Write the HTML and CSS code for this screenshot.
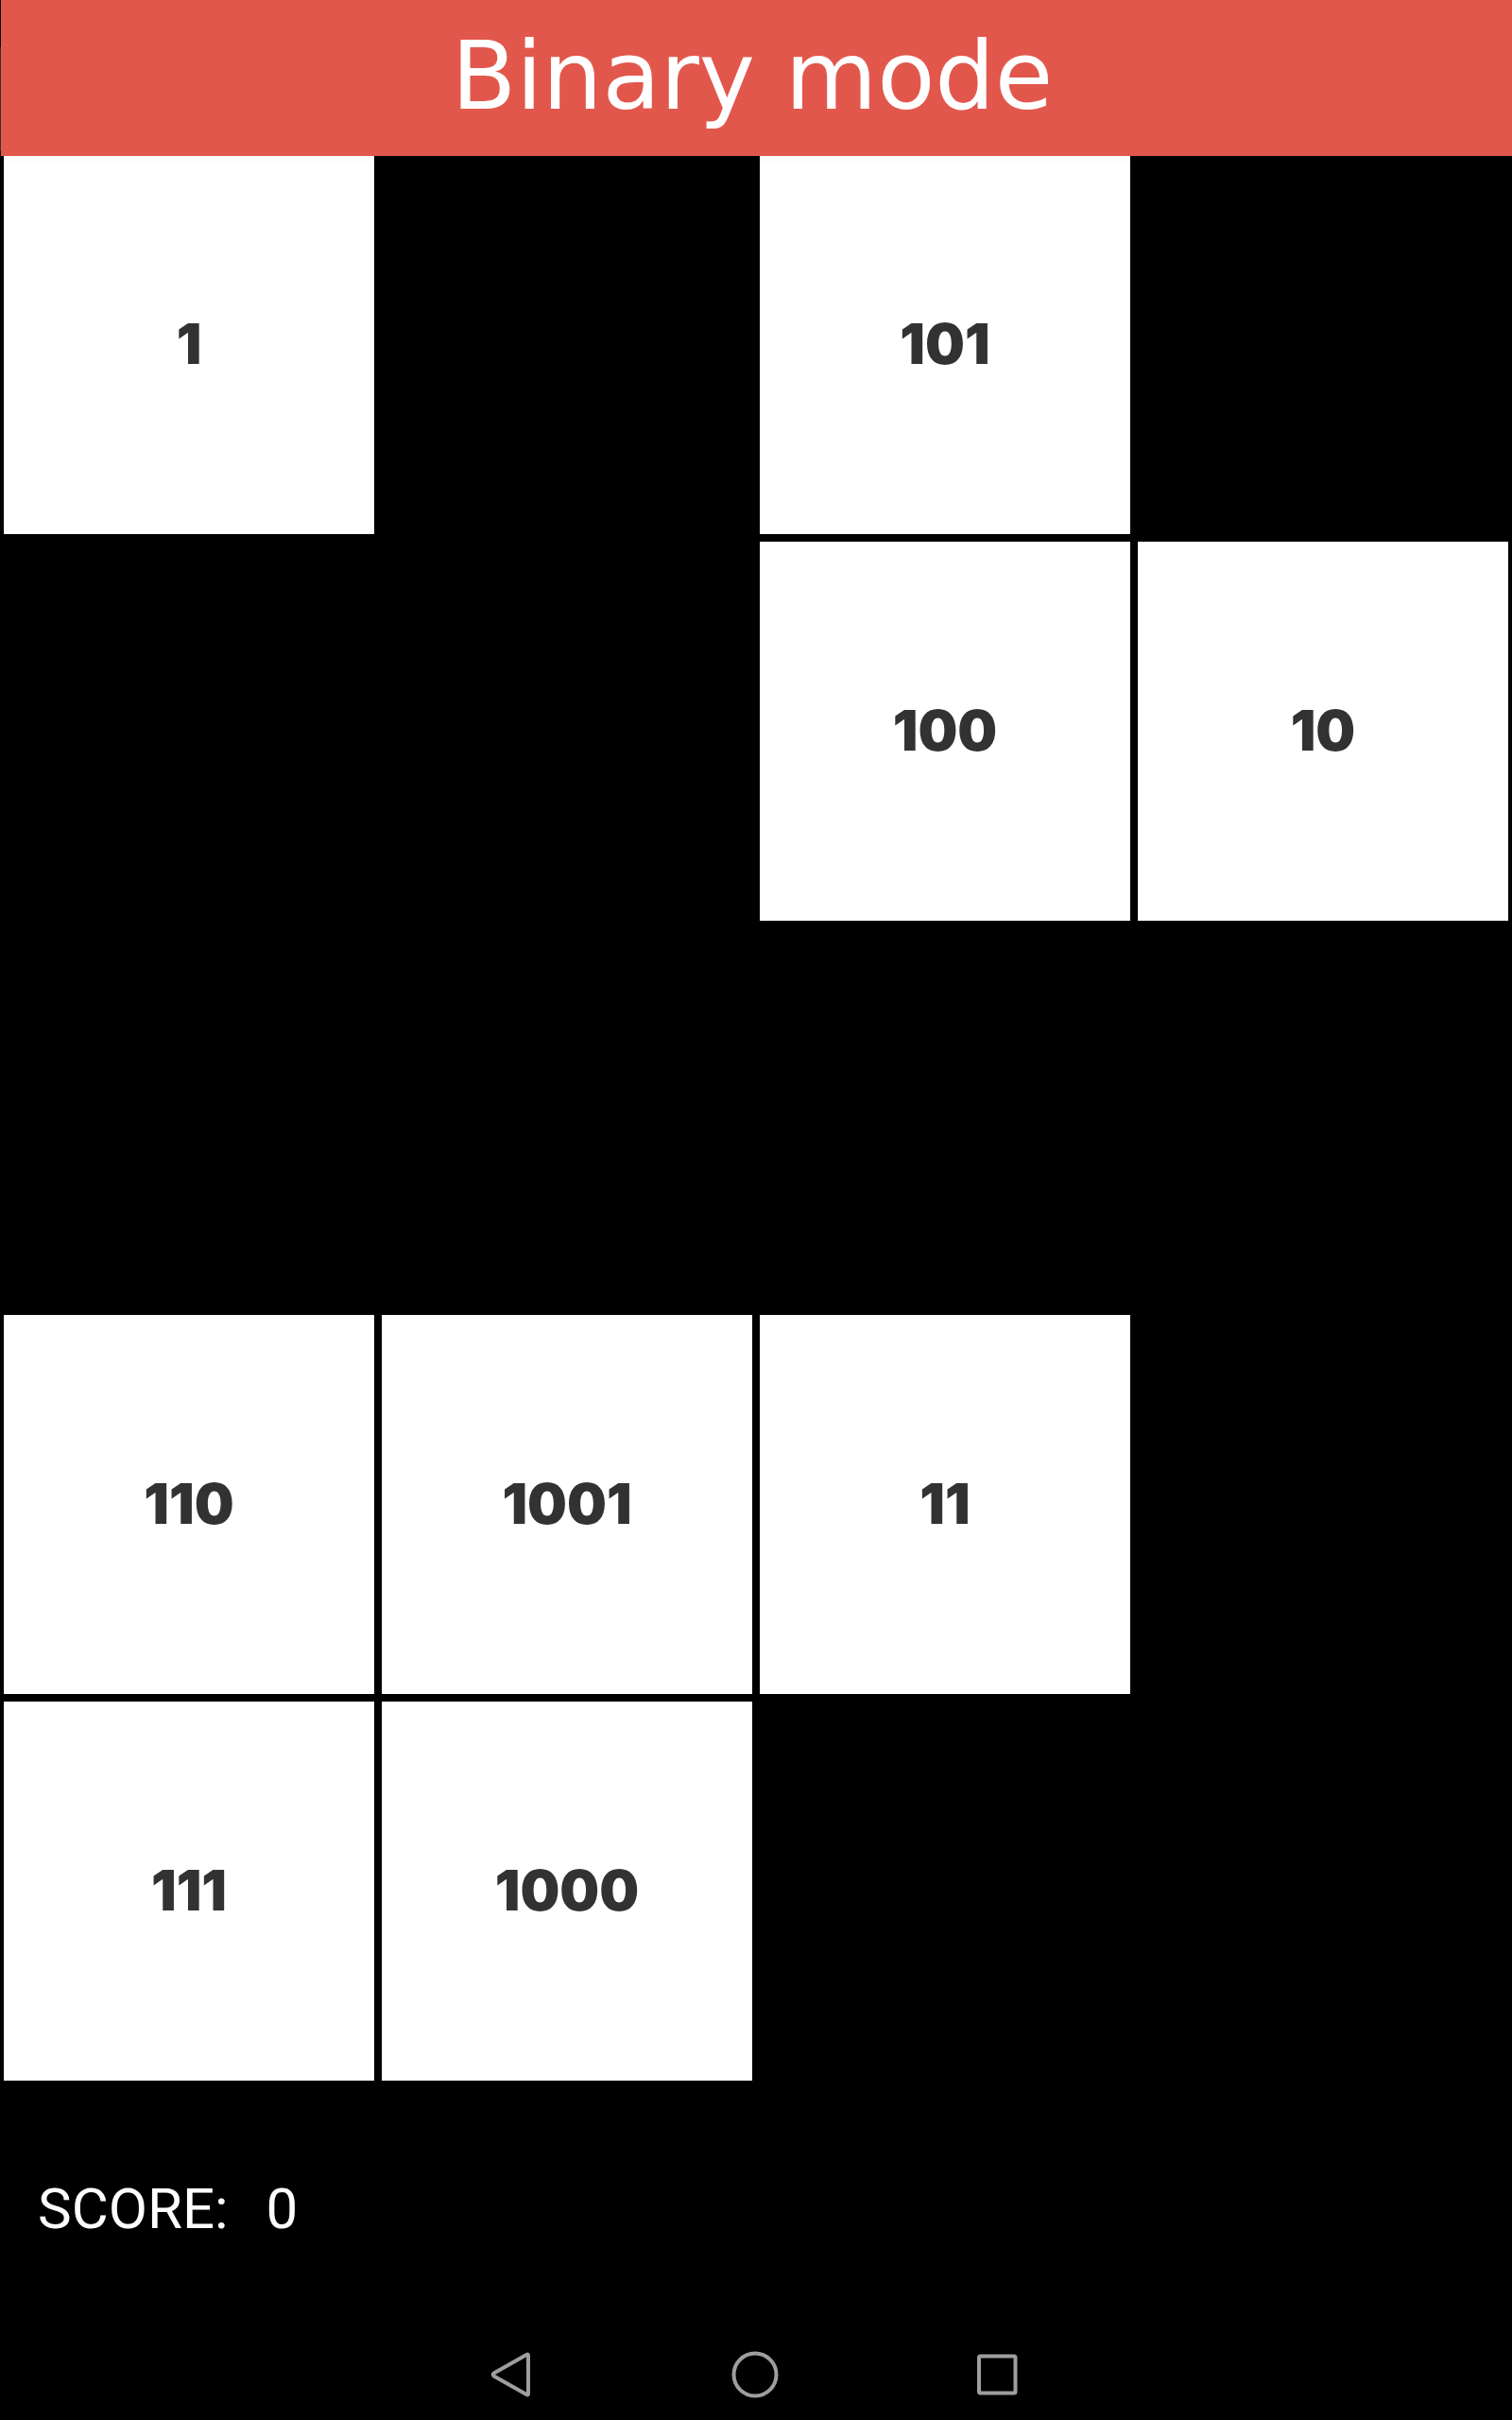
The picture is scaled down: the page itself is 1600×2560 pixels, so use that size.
FILE: index.html
```html
<!DOCTYPE html>
<html lang="en">
<head>
<meta charset="utf-8">
<meta name="viewport" content="width=device-width, initial-scale=1">
<title>Binary mode</title>
<link rel="stylesheet" href="styles.css">
</head>
<body class="game">
<header class="header"><h1 class="title">Binary mode</h1></header>
<main class="board">
<button class="tile" type="button">1</button>
<span></span>
<button class="tile" type="button">101</button>
<span></span>
<span></span>
<span></span>
<button class="tile" type="button">100</button>
<button class="tile" type="button">10</button>
<span></span>
<span></span>
<span></span>
<span></span>
<button class="tile" type="button">110</button>
<button class="tile" type="button">1001</button>
<button class="tile" type="button">11</button>
<span></span>
<button class="tile" type="button">111</button>
<button class="tile" type="button">1000</button>
<span></span>
<span></span>
</main>
<section class="score"><span>SCORE:</span><output>0</output></section>
<nav class="navbar">
<button class="nav-button" type="button" aria-label="Back"><svg class="icon" viewBox="0 0 64 64"><path d="M45.600 10.700 11 30.200Q8.400 32 11 33.800L45.600 53.300Q47 54 47 52V12Q47 10 45.600 10.700Z"/></svg></button>
<button class="nav-button" type="button" aria-label="Home"><svg class="icon" viewBox="0 0 64 64"><circle cx="31" cy="32" r="22.500"/></svg></button>
<button class="nav-button" type="button" aria-label="Recent apps"><svg class="icon" viewBox="0 0 64 64"><rect x="12" y="12.500" width="38.500" height="39" rx="1.500"/></svg></button>
</nav>
</body>
</html>
```
FILE: styles.css
```css
* {
  box-sizing: border-box;
}

.game {
  display: flex;
  flex-direction: column;
  min-height: 100vh;
  margin: 0;
  background: #000;
  color: #fff;
}

.header {
  position: relative;
  z-index: 1;
  display: flex;
  justify-content: center;
  margin-bottom: -1px;
  padding: 21px 8px 24px 0;
  background:
    linear-gradient(#000 50px, #333 50px, #333 160px, #000 160px) 0 0 / 1px 100% no-repeat,
    #e2574c;
  box-shadow: 0 0 12px rgba(0, 0, 0, 0.05);
}

.title {
  margin: 0;
  font: 400 100px/120px "DejaVu Sans", sans-serif;
}

.board {
  flex: 1;
  display: grid;
  grid-template-columns: repeat(4, minmax(0, 1fr));
  grid-template-rows: repeat(5, minmax(0, 1fr));
  gap: 8px;
  padding: 0 4px;
}

.tile {
  padding: 0 0 2px;
  border: 0;
  background: #fff;
  color: #323232;
  font: 900 59px/64px Inter, sans-serif;
}

.score {
  display: flex;
  gap: 40px;
  padding: 100px 40px 107px;
  font: 400 60px/72px Roboto, sans-serif;
}

.navbar {
  display: flex;
  justify-content: center;
  padding-bottom: 16px;
}

.nav-button {
  display: flex;
  justify-content: center;
  width: 256px;
  padding: 0;
  border: 0;
  background: none;
}

.icon {
  width: 64px;
  height: 64px;
  fill: none;
  stroke: #9e9e9e;
  stroke-width: 4;
  stroke-linejoin: round;
}
```
